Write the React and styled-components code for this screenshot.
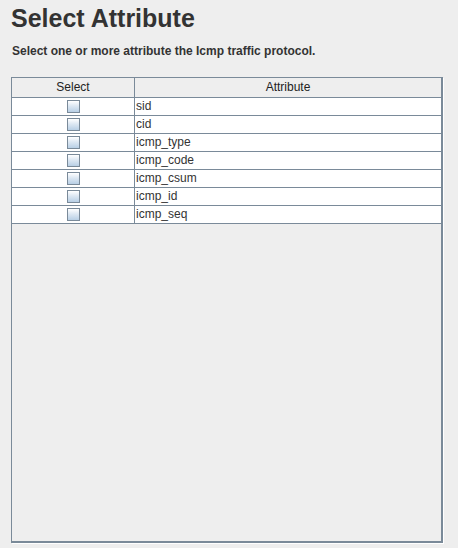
import React, { useState } from 'react';
import styled, { createGlobalStyle } from 'styled-components';

const GlobalStyle = createGlobalStyle`
  html, body { margin: 0; padding: 0; background: #eeeeee; }
  body { font-family: "Liberation Sans", Arial, sans-serif; }
`;

const Page = styled.div`
  box-sizing: border-box;
  height: 548px;
  padding: 3px 15px 5px 11px;
  display: flex;
  flex-direction: column;
`;

const Title = styled.h1`
  margin: 0;
  font-size: 25px;
  line-height: 30px;
  font-weight: 700;
  color: #333333;
`;

const Subtitle = styled.p`
  margin: 11px 0 0 1px;
  font-size: 12px;
  line-height: 14px;
  font-weight: 700;
  color: #333333;
`;

const Table = styled.div`
  margin-top: 19px;
  flex: 1;
  width: 432px;
  box-sizing: border-box;
  border-style: solid;
  border-color: #7a8a99;
  border-width: 1px 2px 2px 1px;
  box-shadow: 1px 1px 0 #ffffff;
  background: #eeeeee;
`;

const Row = styled.div`
  display: grid;
  grid-template-columns: 123px 306px;
  height: ${p => (p.$header ? 20 : 18)}px;
  box-sizing: border-box;
  border-bottom: 1px solid #7a8a99;
  background: ${p => (p.$header ? '#eeeeee' : '#ffffff')};
`;

const Cell = styled.div`
  box-sizing: border-box;
  display: flex;
  align-items: center;
  justify-content: ${p => (p.$center ? 'center' : 'flex-start')};
  padding-left: ${p => (p.$center ? 0 : 1)}px;
  border-right: ${p => (p.$divider ? '1px solid #7a8a99' : 'none')};
  font-size: 12px;
  color: ${p => (p.$header ? '#222222' : '#333333')};
  line-height: 17px;
`;

const Box = styled.span`
  width: 13px;
  height: 13px;
  box-sizing: border-box;
  border: 1px solid #7a8a99;
  background: ${p => (p.$on ? '#b8cfe5' : 'linear-gradient(180deg, #ffffff 0%, #dde8f3 45%, #b8cfe5 100%)')};
  cursor: pointer;
  margin-left: 1px;
`;

const attributes = ['sid', 'cid', 'icmp_type', 'icmp_code', 'icmp_csum', 'icmp_id', 'icmp_seq'];

export default function App() {
  const [checked, setChecked] = useState({});

  return (
    <>
      <GlobalStyle />
      <Page>
        <Title>Select Attribute</Title>
        <Subtitle>Select one or more attribute the Icmp traffic protocol.</Subtitle>
        <Table>
          <Row $header>
            <Cell $center $divider $header>Select</Cell>
            <Cell $center $header>Attribute</Cell>
          </Row>
          {attributes.map(a => (
            <Row key={a}>
              <Cell $center $divider>
                <Box $on={checked[a]} onClick={() => setChecked({ ...checked, [a]: !checked[a] })} />
              </Cell>
              <Cell>{a}</Cell>
            </Row>
          ))}
        </Table>
      </Page>
    </>
  );
}
